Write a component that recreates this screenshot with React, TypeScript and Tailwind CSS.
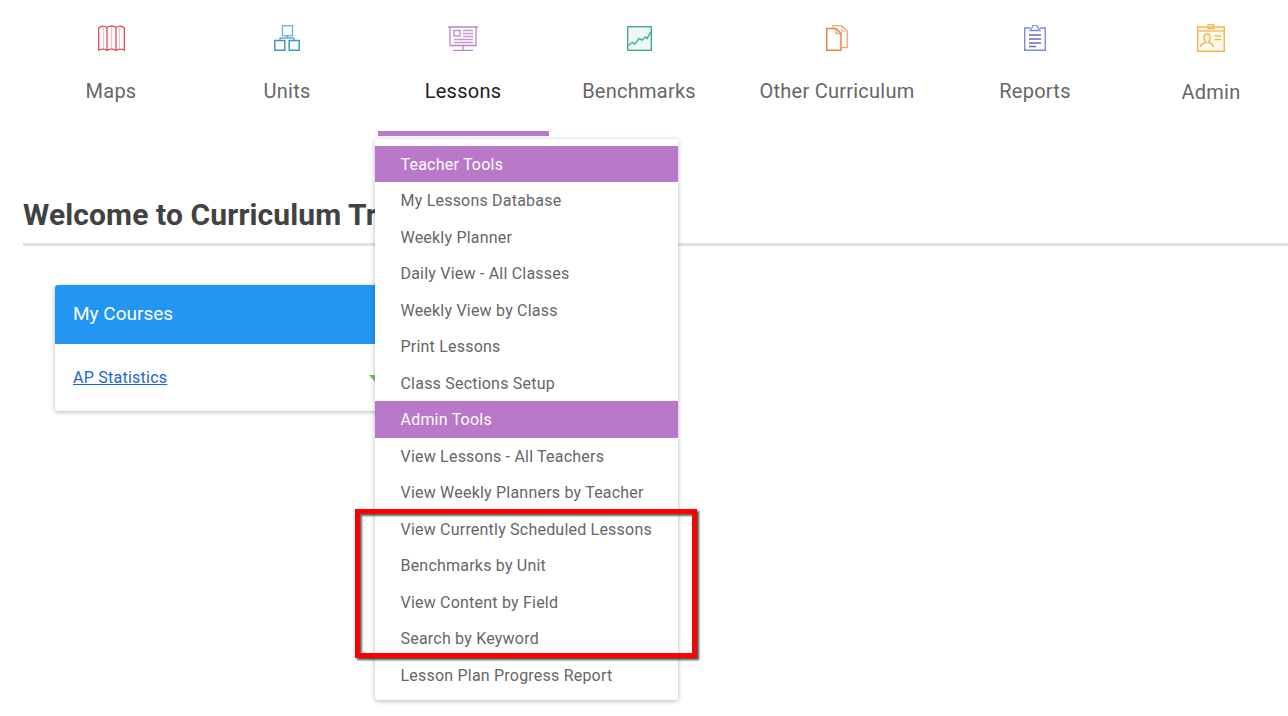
import React from "react";

const s = { fill: "none", strokeWidth: 1.3 } as const;

const MapIcon = () => (
  <svg width="27" height="26" viewBox="0 0 27 26" {...s} stroke="#d4505c">
    <path d="M0.7 3 Q4.5 -0.5 9 2.5 Q13.5 -0.5 18 2.5 Q22.5 -0.5 26.3 3 V25.3 Q22.5 23 18 25.3 Q13.5 23 9 25.3 Q4.5 23 0.7 25.3 Z" />
    <path d="M9 2.5 V25 M18 2.5 V25" />
    <path d="M5.5 2 V24 M21.5 2 V24 M13.5 2 V24" strokeOpacity="0.35" />
  </svg>
);
const UnitsIcon = () => (
  <svg width="26" height="26" viewBox="0 0 26 26" {...s} stroke="#3f97c4">
    <rect x="8.5" y="0.7" width="10" height="10" stroke="#6fb0cc" />
    <rect x="0.8" y="15.5" width="10" height="9.8" strokeWidth="1.5" />
    <rect x="15.2" y="15.5" width="10" height="9.8" strokeWidth="1.5" />
    <path d="M13.5 10.7 V13 M6 15.5 V13 H20 V15.5" strokeOpacity="0.8" />
  </svg>
);
const LessonIcon = () => (
  <svg width="30" height="25" viewBox="0 0 30 25" {...s} stroke="#bd85c9">
    <path d="M0 1 H30 M2 1 V19.5 H28 V1" />
    <path d="M15 19.5 V24 M5 24.4 H25" />
    <rect x="6" y="4.5" width="6" height="5.5" />
    <path d="M15 4.5 H25 M15 7.5 H25 M15 10.5 H25 M6 13.5 H25 M6 16.5 H25" strokeOpacity="0.85" />
  </svg>
);
const ChartIcon = () => (
  <svg width="25" height="25" viewBox="0 0 25 25" {...s} stroke="#36a883">
    <rect x="0.7" y="0.7" width="23.6" height="23.6" fill="#eef8f4" />
    <path d="M1.5 19.5 L5 16.5 L8 18 L12 12.5 L15 14 L18.5 11 L20 12.5 L24 6" strokeWidth="1.5" strokeOpacity="0.85" />
  </svg>
);
const DocsIcon = () => (
  <svg width="22" height="26" viewBox="0 0 22 26" {...s} stroke="#e8824a">
    <path d="M7 2.5 V0.7 H15.5 L21.3 6 V22.5 H15.5" stroke="#eda57a" />
    <path d="M15.5 0.7 V6 H21.3" stroke="#f2c2a6" />
    <path d="M0.7 3.5 H10 L15 8.5 V25.3 H0.7 Z" strokeWidth="1.5" />
    <path d="M10 3.5 V8.5 H15" strokeOpacity="0.7" />
  </svg>
);
const ClipIcon = () => (
  <svg width="22" height="26" viewBox="0 0 22 26" {...s} stroke="#7f8bdc">
    <path d="M6 3 H0.7 V25.3 H21.3 V3 H16" strokeWidth="1.4" />
    <path d="M6 5.5 H16 L13.5 1.8 A2.5 1.8 0 0 0 8.5 1.8 Z" />
    <path d="M5 10 H17 M5 14 H17 M5 18 H17 M5 21.5 H12" stroke="#6670b4" />
  </svg>
);
const BadgeIcon = () => (
  <svg width="28" height="28" viewBox="0 0 28 28" {...s} stroke="#efb84f">
    <path d="M0.7 3 H27.3 V27.3 H0.7 Z" fill="#fffaf0" strokeWidth="1.5" />
    <path d="M0.7 7 H27.3" />
    <rect x="11" y="0.7" width="6" height="4" />
    <path d="M3.5 23 Q3.5 19.5 9 18.5 Q7 16 7 13.5 Q7 10 10 10 Q13 10 13 13.5 Q13 16 11.5 18.5 Q16 19.5 16 23" strokeWidth="1.5" />
    <path d="M17.5 12 H24 M17.5 15.5 H24" strokeWidth="1.7" />
  </svg>
);

const NAV = [
  { label: "Maps", w: "w-[176px]", icon: <MapIcon /> },
  { label: "Units", w: "w-[176px]", icon: <UnitsIcon /> },
  { label: "Lessons", w: "w-[176px]", icon: <LessonIcon /> },
  { label: "Benchmarks", w: "w-[176px]", icon: <ChartIcon /> },
  { label: "Other Curriculum", w: "w-[220px]", icon: <DocsIcon /> },
  { label: "Reports", w: "w-[176px]", icon: <ClipIcon /> },
  { label: "Admin", w: "w-[176px]", icon: <BadgeIcon /> },
];

const MENU: [string, boolean][] = [
  ["Teacher Tools", true],
  ["My Lessons Database", false],
  ["Weekly Planner", false],
  ["Daily View - All Classes", false],
  ["Weekly View by Class", false],
  ["Print Lessons", false],
  ["Class Sections Setup", false],
  ["Admin Tools", true],
  ["View Lessons - All Teachers", false],
  ["View Weekly Planners by Teacher", false],
  ["View Currently Scheduled Lessons", false],
  ["Benchmarks by Unit", false],
  ["View Content by Field", false],
  ["Search by Keyword", false],
  ["Lesson Plan Progress Report", false],
];

export default function App() {
  return (
    <div className="relative w-[1288px] h-[716px] overflow-hidden bg-white font-['Roboto',sans-serif]">
      <nav className="flex w-[1320px] pl-[23px] h-[136px]">
        {NAV.map((n) => {
          const active = n.label === "Lessons";
          return (
            <div key={n.label} className={`${n.w} shrink-0 relative flex flex-col items-center pt-[24px]`}>
              <div className="h-[28px] flex items-center justify-center">{n.icon}</div>
              <span
                className={`absolute left-0 right-0 text-center text-[20px] leading-[26px] tracking-[0.25px] ${
                  active ? "text-[#212121]" : "text-[#666666]"
                } ${n.label === "Admin" ? "top-[79px]" : "top-[78px]"}`}
              >
                {n.label}
              </span>
              {active && <div className="absolute left-[3px] top-[131px] w-[171px] h-[5px] bg-[#ba78c9]" />}
            </div>
          );
        })}
      </nav>

      <div className="pl-[23px]">
        <div className="mt-[60px] border-b-[3px] border-[#e0e0e0] h-[50px]">
          <h1 className="text-[30px] leading-[38px] font-bold text-[#424242] tracking-[0.12px] whitespace-nowrap">
            Welcome to Curriculum Trak
          </h1>
        </div>
        <div className="ml-[32px] mt-[39px] w-[400px] rounded-[3px] shadow-[0_1px_4px_rgba(0,0,0,0.3)] overflow-hidden">
          <div className="h-[59px] bg-[#2196f3] flex items-center pl-[18px] text-white text-[19px]">My Courses</div>
          <div className="h-[67px] bg-white flex items-center justify-between pl-[18px] pr-[72px]">
            <a className="text-[16px] tracking-[0.25px] text-[#1a66d0] underline">AP Statistics</a>
            <span className="w-0 h-0 border-x-[7px] border-x-transparent border-t-[8px] border-t-[#7cc04b] mt-[2px]" />
          </div>
        </div>
      </div>

      <div className="absolute left-[375px] top-[139px] w-[303px] h-[561px] bg-white rounded-[3px] pt-[6.8px] shadow-[0_1px_5px_rgba(0,0,0,0.3)]">
        {MENU.map(([t, head]) => (
          <div
            key={t}
            className={`h-[36.5px] flex items-center pt-[1px] pl-[25.5px] text-[16px] tracking-[0.21px] whitespace-nowrap ${
              head ? "bg-[#ba78c9] text-white" : "text-[#666666]"
            }`}
          >
            {t}
          </div>
        ))}
      </div>

      <div className="absolute left-[355px] top-[509px] w-[342px] h-[149px] border-[5px] border-[#ff0000] shadow-[2px_2px_2px_rgba(0,0,0,0.7),inset_2px_2px_2px_rgba(0,0,0,0.6)]" />
    </div>
  );
}
